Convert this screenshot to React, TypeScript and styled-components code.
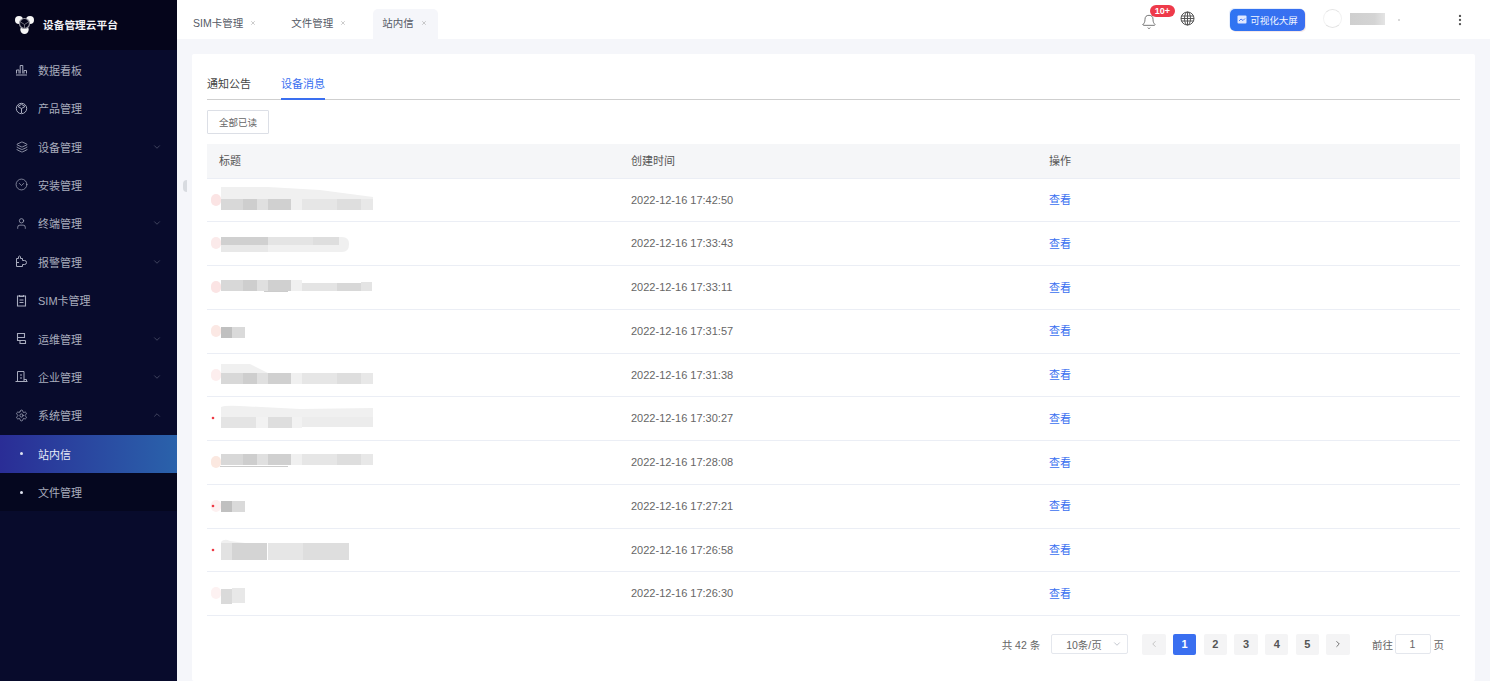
import React from "react";
import styled, { createGlobalStyle } from "styled-components";
import { Bell, X, ChevronDown, ChevronUp, ChevronLeft, ChevronRight, Layers, CircleChevronDown, User, Settings, EllipsisVertical } from "lucide-react";

const FONT = `"Liberation Sans", "Noto Sans CJK SC", sans-serif`;

const Global = createGlobalStyle`
  html, body { margin: 0; padding: 0; height: 100%; overflow: hidden; }
  body { font-family: ${FONT}; background: #f5f6fa; }
  #root { height: 100%; }
  * { box-sizing: border-box; }
`;

const Shell = styled.div`display: flex; width: 1490px; height: 681px; overflow: hidden;`;
const Sidebar = styled.aside`width: 177px; flex: none; background: #080b2c; display: flex; flex-direction: column;`;
const Brand = styled.div`height: 50px; background: #05051b; display: flex; align-items: center; padding: 0 0 2px 15px; gap: 9px; color: #f2f2f6; font-size: 10.7px; font-weight: 700;`;
const Menu = styled.nav`display: flex; flex-direction: column; padding-top: 0.6px;`;
const MenuRow = styled.div<{ $variant?: "active" | "sub" }>`
  height: 38.4px; display: flex; align-items: center; font-size: 11px; flex: none;
  padding-left: 15px; padding-right: 15px;
  color: ${p => p.$variant === "active" ? "#e8ecf8" : "#a9adbd"};
  background: ${p => p.$variant === "active" ? "linear-gradient(90deg,#2a2d96,#2a62ab)" : p.$variant === "sub" ? "#05071f" : "transparent"};
`;
const MenuIcon = styled.span`width: 13px; height: 13px; flex: none; margin-right: 10px; display: flex; align-items: center; justify-content: center; color: #a8acbe;`;
const Dot = styled.span`width: 3px; height: 3px; border-radius: 50%; background: #dfe3f0; margin: 0 15px 0 5px; flex: none;`;
const MenuLabel = styled.span`flex: 1;`;
const Caret = styled.span`display: flex; color: #4a4e68;`;

const Main = styled.div`flex: 1; min-width: 0; display: flex; flex-direction: column; position: relative;`;
const TopBar = styled.header`height: 39px; background: #fff; display: flex; align-items: flex-end; flex: none;`;
const TabStrip = styled.div`display: flex; align-items: flex-end; flex: 1; padding-left: 16px;`;
const Tab = styled.div<{ $active?: boolean }>`
  height: 30px; display: flex; align-items: center; gap: 7px; font-size: 10.5px; color: #555a66;
  padding: ${p => p.$active ? "0 11px 3px 9px" : "0 0 3px 0"};
  margin-right: 35px;
  background: ${p => p.$active ? "#f5f6fa" : "transparent"};
  border-radius: 5px 5px 0 0;
  &:nth-child(2) { margin-right: 27px; }
  svg { color: #999; }
`;
const Tools = styled.div`height: 39px; display: flex; align-items: center; flex: none; width: 352px; position: relative;`;
const BellBox = styled.div`position: relative; display: flex; margin-left: 3px; top: 2px; color: #555;`;
const Badge = styled.span`position: absolute; top: -9px; left: 9px; height: 12px; width: 25px; border-radius: 6px; background: #ee3a4a; color: #fff; font-size: 9px; font-weight: 700; line-height: 12px; text-align: center;`;
const GlobeBox = styled.div`display: flex; margin-left: 23px; color: #555; position: relative; top: -1px;`;
const ScreenBtn = styled.div`
  margin-left: 35px; width: 75px; height: 22px; border-radius: 5px; background: linear-gradient(90deg,#2f74f2,#3a6ff0);
  color: #f2f6ff; font-size: 9.5px; display: flex; align-items: center; justify-content: center; gap: 3px;
  box-shadow: -1px -1px 0 #e6eefc, 1px 1px 0 #f6e8e8;
`;
const Avatar = styled.div`
  margin-left: 18px; width: 19px; height: 19px; border-radius: 50%; position: relative; top: -1px;
  border: 1px solid #e4e4e4; border-left-color: #f2f2f2; border-right-color: #f2f2f2; background: #fff;
`;
const UserBlur = styled.div`margin-left: 8px; width: 35px; height: 12px; background: linear-gradient(90deg,#cfcfcf,#d4d4d4 70%,#e4e4e4); position: relative; top: -1px;`;
const UserDot = styled.span`width: 2px; height: 2px; border-radius: 50%; background: #ccc; margin-left: 13px;`;
const More = styled.div`position: absolute; right: 23px; top: 13px; display: flex; color: #555;`;

const Content = styled.main`flex: 1; padding: 15px 15px 0 15px; position: relative;`;
const Card = styled.section`background: #fff; height: 100%; padding: 15px 15px 0 15px; border-radius: 2px;`;
const SubTabs = styled.div`display: flex; height: 31px; border-bottom: 1px solid #cfcfcf; gap: 30px; font-size: 11px;`;
const SubTab = styled.div<{ $active?: boolean }>`
  height: 31px; line-height: 30px; color: ${p => p.$active ? "#3a6ff0" : "#444"};
  border-bottom: ${p => p.$active ? "2px solid #3a6ff0" : "none"};
`;
const ReadAll = styled.button`
  display: block; margin: 10px 0 10px; width: 62px; height: 24px; background: #fff; border: 1px solid #dcdfe6; border-radius: 1px;
  font: 9.5px ${FONT}; color: #666; padding: 0;
`;
const Table = styled.div`display: flex; flex-direction: column; font-size: 11px;`;
const Row = styled.div`display: grid; grid-template-columns: 412px 418px 1fr; height: 43.75px; flex: none; align-items: center; border-bottom: 1px solid #ebeef5; color: #666;`;
const HeadRow = styled(Row)`height: 34.5px; background: #f5f6f8; color: #555;`;
const Cell = styled.div`padding: 0 0 1px 12px; display: flex; align-items: center;`;
const TitleCell = styled.div`display: flex; height: 100%;`;
const LinkText = styled.span`color: #3a6ff0; cursor: pointer; position: relative; top: -0.5px;`;

const Pager = styled.div`display: flex; align-items: center; justify-content: flex-end; height: 30px; margin-top: 13px; font-size: 10.5px; color: #666; padding-right: 16px;`;
const Total = styled.span`margin-right: 11px;`;
const SizeSel = styled.div`width: 77px; height: 20px; border: 1px solid #e4e7ed; border-radius: 2px; display: flex; align-items: center; padding: 0 5px 0 14px; justify-content: space-between; margin-right: 14px; color: #666; svg { color: #b8bcc5; }`;
const PageBtn = styled.div<{ $active?: boolean; $muted?: boolean }>`
  width: 23.5px; height: 21px; border-radius: 2px; margin-right: 7.2px; display: flex; align-items: center; justify-content: center; font-weight: 700; font-size: 11px;
  background: ${p => p.$active ? "#3a6ff0" : "#f4f4f5"}; color: ${p => p.$active ? "#fff" : p.$muted ? "#bbb" : "#555"};
`;
const Goto = styled.span`margin-left: 15px;`;
const GotoInput = styled.div`width: 36px; height: 20px; border: 1px solid #e4e7ed; border-radius: 2px; margin: 0 3px 0 1.5px; display: flex; align-items: center; justify-content: center; color: #666;`;

const Collapse = styled.div`position: absolute; left: 6px; top: 141px; width: 4px; height: 12px; background: #d8dbe0; border-radius: 4px 0 0 4px;`;
const BlurSvg = styled.svg`filter: blur(0.5px);`;

type R = [number, number, number, number, string];
const bandA = (y: number): R[] => [[221,y,22,11,"#d8d8d8"],[243,y,14,11,"#cecece"],[257,y,11,11,"#e0e0e0"],[268,y,23,11,"#d0d0d0"],[291,y,11,11,"#f0f0f0"],[302,y,35,11,"#e6e6e6"],[337,y,24,11,"#dedede"],[361,y,12,11,"#e8e8e8"]];
const blurRows: { shape?: string; rects: R[]; pink?: string; red?: [number, number]; specks?: [number, number, number] }[] = [
  { shape: "M221 8 H268 L320 11 L373 18 V20 H221Z", rects: bandA(20), pink: "#fbe4e4" },
  { rects: [[221,15,47,8,"#d0d0d0"],[268,15,45,8,"#e4e4e4"],[313,15,26,8,"#dedede"],[221,23,47,7,"#e8e8e8"],[268,23,71,7,"#f0f0f0"]], shape: "M339 15 H342 Q349 15 349 22 Q349 30 342 30 H339Z", pink: "#fbeaea" },
  { rects: bandA(14).slice(0,5).concat([[302,17,35,8,"#e4e4e4"],[337,17,24,8,"#d8d8d8"],[361,16,11,9,"#e4e4e4"]] as R[]), pink: "#fbe4e4", specks: [264, 25, 24] },
  { rects: [[221,17,11,11,"#c0c0c0"],[232,17,13,11,"#dadada"]], pink: "#fbe8e4" },
  { shape: "M221 10 H250 L270 20 L373 20 V21 H221Z", rects: bandA(19), pink: "#fdeeee" },
  { shape: "M221 10 Q225 8 240 9 L300 12 L373 11 V20 H221Z", rects: [[221,20,35,11,"#e4e4e4"],[256,20,12,11,"#f2f2f2"],[268,20,24,11,"#dedede"],[292,20,10,11,"#f2f2f2"],[302,20,71,10,"#ececec"]], red: [213, 21] },
  { rects: bandA(13), pink: "#fbe8e0", specks: [220, 25, 68] },
  { rects: [[221,16,11,11,"#c0c0c0"],[232,16,13,11,"#dadada"]], pink: "#fdf0f0", red: [213, 21] },
  { shape: "M221 13 Q224 9 230 12 L245 14 H221Z", rects: [[221,14,11,17,"#e2e2e2"],[232,14,35,17,"#d4d4d4"],[268,14,35,17,"#e6e6e6"],[303,14,46,17,"#dedede"]], red: [213, 21] },
  { rects: [[221,17,11,15,"#dadada"],[232,16,13,15,"#e8e8e8"]], pink: "#fdf2f2" },
];

const MOSAIC_LEFT = 207;

function BlurTitle({ shape, rects, pink, red, specks }: typeof blurRows[number]) {
  return (
    <BlurSvg width="200" height="43" viewBox={`${MOSAIC_LEFT} 0 200 43`} aria-hidden="true">
      {pink && <rect x="211" y="15" width="10" height="12" rx="5" fill={pink} />}
      {red && <circle cx={red[0]} cy={red[1]} r="1.3" fill="#ee3a45" />}
      {shape && <path d={shape} fill="#f0f0f0" />}
      {rects.map((r, i) => <rect key={i} x={r[0]} y={r[1]} width={r[2]} height={r[3]} fill={r[4]} />)}
      {specks && <rect x={specks[0]} y={specks[1]} width={specks[2]} height="1" fill="#aaa" opacity="0.6" />}
    </BlurSvg>
  );
}

const Logo = () => (
  <svg width="19" height="19" viewBox="0 0 19 19" aria-hidden="true">
    <circle cx="4" cy="5" r="4" fill="#f6f6f6" />
    <circle cx="15" cy="5" r="4" fill="#f6f6f6" />
    <circle cx="9.5" cy="14.8" r="4.2" fill="#f6f6f6" />
    <circle cx="9.5" cy="8.5" r="5" fill="#05051b" stroke="#9a9aa4" strokeWidth="1.2" />
    <path d="M5.5 7 L9.5 9.5 L13.5 7 M9.5 9.5 V13" stroke="#6e6e78" strokeWidth="1" fill="none" />
  </svg>
);

const GlobeGrid = () => (
  <svg width="15" height="15" viewBox="0 0 15 15" fill="none" stroke="currentColor" strokeWidth="1" aria-hidden="true">
    <circle cx="7.5" cy="7.5" r="6.5" />
    <ellipse cx="7.5" cy="7.5" rx="3" ry="6.5" />
    <path d="M7.5 1V14M1.5 5H13.5M1 7.5H14M1.5 10H13.5" />
  </svg>
);
const Bars = () => (
  <svg width="13" height="13" viewBox="0 0 13 13" fill="none" stroke="currentColor" strokeWidth="1" aria-hidden="true">
    <path d="M1 12H12M1.5 10.5V7H4V10.5M5.2 10.5V2.5H7.8V10.5M9 10.5V7.5H11.5V10.5" />
  </svg>
);
const ProductIcon = () => (
  <svg width="13" height="13" viewBox="0 0 13 13" fill="none" stroke="currentColor" strokeWidth="1" aria-hidden="true">
    <circle cx="6.5" cy="6.5" r="5.2" />
    <path d="M3 4.5L6.5 6.5L10 4.5M6.5 6.5V11M3 4.5L6.5 2.3L10 4.5" />
  </svg>
);
const AlarmIcon = () => (
  <svg width="13" height="13" viewBox="0 0 13 13" fill="none" stroke="currentColor" strokeWidth="1" aria-hidden="true">
    <path d="M1.5 11.5H7.5V9.5H9.5Q11.5 9.5 11.5 7.5Q11.5 5.5 9.5 5.5H7.5V3.5H5.5Q6 1 4.5 1Q3 1 3.5 3.5H1.5Z" />
    <path d="M1.5 7.5H4" />
  </svg>
);
const SimIcon = () => (
  <svg width="13" height="13" viewBox="0 0 13 13" fill="none" stroke="currentColor" strokeWidth="1.1" aria-hidden="true">
    <path d="M2.5 2H10.5V12H2.5ZM4.5 1V2.5H8.5V1M4.5 6H8.5M4.5 8.5H8.5" />
  </svg>
);
const Ops = () => (
  <svg width="13" height="13" viewBox="0 0 13 13" fill="none" stroke="currentColor" strokeWidth="1.1" aria-hidden="true">
    <path d="M2.5 1.5H9.5V5.5H2.5ZM2.5 5.5V8.5H10.5M5 8.5V11.5H10.5V8.5" />
  </svg>
);
const Org = () => (
  <svg width="13" height="13" viewBox="0 0 13 13" fill="none" stroke="currentColor" strokeWidth="1" aria-hidden="true">
    <path d="M2.5 11.5V1.5H9V11.5M0.5 11.5H12.5M5 5H7M5 8H7M9 9.5H11.5V11.5" />
  </svg>
);
const ScreenIcon = () => (
  <svg width="10" height="9" viewBox="0 0 10 9" fill="none" aria-hidden="true">
    <rect x="0.5" y="0.5" width="9" height="8" rx="1" fill="#dfe8ff" />
    <path d="M2 6L4 4L6 5.5L8 3.5" stroke="#3a6ff0" strokeWidth="0.9" />
  </svg>
);

const menuItems: { label: string; icon: React.ReactNode; caret?: "down" | "up" }[] = [
  { label: "数据看板", icon: <Bars /> },
  { label: "产品管理", icon: <ProductIcon /> },
  { label: "设备管理", icon: <Layers size={12} strokeWidth={1.6} />, caret: "down" },
  { label: "安装管理", icon: <CircleChevronDown size={13} strokeWidth={1.3} /> },
  { label: "终端管理", icon: <User size={13} strokeWidth={1.4} />, caret: "down" },
  { label: "报警管理", icon: <AlarmIcon />, caret: "down" },
  { label: "SIM卡管理", icon: <SimIcon /> },
  { label: "运维管理", icon: <Ops />, caret: "down" },
  { label: "企业管理", icon: <Org />, caret: "down" },
  { label: "系统管理", icon: <Settings size={13} strokeWidth={1.4} />, caret: "up" },
];

const times = ["17:42:50", "17:33:43", "17:33:11", "17:31:57", "17:31:38", "17:30:27", "17:28:08", "17:27:21", "17:26:58", "17:26:30"];

export default function App() {
  return (
    <Shell>
      <Global />
      <Sidebar>
        <Brand><Logo /><span>设备管理云平台</span></Brand>
        <Menu>
          {menuItems.map(m => (
            <MenuRow key={m.label}>
              <MenuIcon>{m.icon}</MenuIcon>
              <MenuLabel>{m.label}</MenuLabel>
              {m.caret && <Caret>{m.caret === "down" ? <ChevronDown size={10} /> : <ChevronUp size={10} />}</Caret>}
            </MenuRow>
          ))}
          <MenuRow $variant="active"><Dot /><MenuLabel>站内信</MenuLabel></MenuRow>
          <MenuRow $variant="sub"><Dot /><MenuLabel>文件管理</MenuLabel></MenuRow>
        </Menu>
      </Sidebar>
      <Main>
        <TopBar>
          <TabStrip>
            <Tab>SIM卡管理<X size={6} /></Tab>
            <Tab>文件管理<X size={6} /></Tab>
            <Tab $active>站内信<X size={6} /></Tab>
          </TabStrip>
          <Tools>
            <BellBox><Bell size={16} strokeWidth={1.2} /><Badge>10+</Badge></BellBox>
            <GlobeBox><GlobeGrid /></GlobeBox>
            <ScreenBtn><ScreenIcon />可视化大屏</ScreenBtn>
            <Avatar />
            <UserBlur />
            <UserDot />
            <More><EllipsisVertical size={14} /></More>
          </Tools>
        </TopBar>
        <Content>
          <Collapse />
          <Card>
            <SubTabs>
              <SubTab>通知公告</SubTab>
              <SubTab $active>设备消息</SubTab>
            </SubTabs>
            <ReadAll>全部已读</ReadAll>
            <Table>
              <HeadRow><Cell>标题</Cell><Cell>创建时间</Cell><Cell>操作</Cell></HeadRow>
              {times.map((t, i) => (
                <Row key={t}>
                  <TitleCell><BlurTitle {...blurRows[i]} /></TitleCell>
                  <Cell>2022-12-16 {t}</Cell>
                  <Cell><LinkText>查看</LinkText></Cell>
                </Row>
              ))}
            </Table>
            <Pager>
              <Total>共 42 条</Total>
              <SizeSel>10条/页<ChevronDown size={10} /></SizeSel>
              <PageBtn $muted><ChevronLeft size={10} /></PageBtn>
              <PageBtn $active>1</PageBtn>
              <PageBtn>2</PageBtn>
              <PageBtn>3</PageBtn>
              <PageBtn>4</PageBtn>
              <PageBtn>5</PageBtn>
              <PageBtn><ChevronRight size={10} /></PageBtn>
              <Goto>前往</Goto>
              <GotoInput>1</GotoInput>
              <span>页</span>
            </Pager>
          </Card>
        </Content>
      </Main>
    </Shell>
  );
}
